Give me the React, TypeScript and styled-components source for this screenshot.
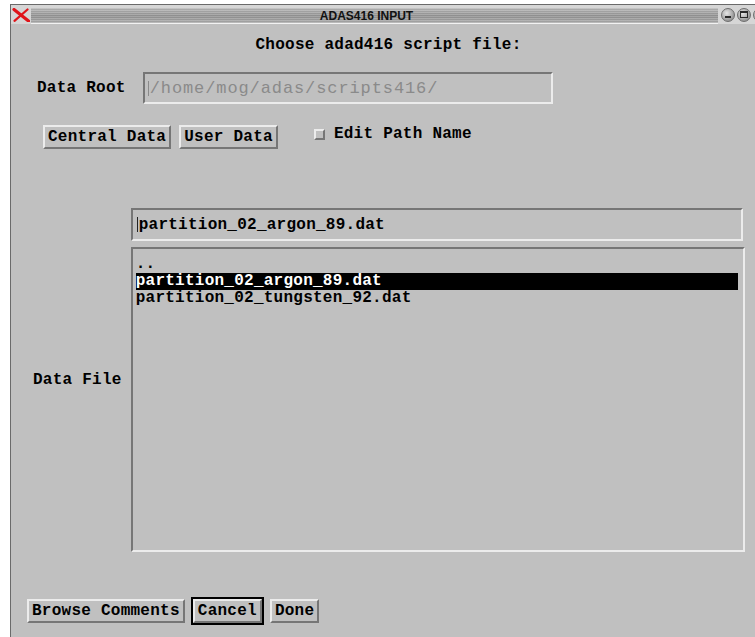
import React from "react";
import styled, { createGlobalStyle, css } from "styled-components";

const mono = `"Liberation Mono", "DejaVu Sans Mono", monospace`;

const GlobalStyle = createGlobalStyle`
  html, body {
    margin: 0;
    padding: 0;
    background: #ffffff;
    overflow: hidden;
  }
  #root {
    width: 755px;
    height: 637px;
    overflow: hidden;
  }
`;

const raised = css`
  border: 2px solid;
  border-color: #ececec #767676 #767676 #ececec;
`;

const sunken = css`
  border: 2px solid;
  border-color: #767676 #ececec #ececec #767676;
`;

const Window = styled.div`
  margin: 4px 0 0 10px;
  width: 755px;
  height: 640px;
  background: #c0c0c0;
  border-top: 1px solid #6a6a6a;
  border-left: 1px solid #6a6a6a;
  display: flex;
  flex-direction: column;
  font-family: ${mono};
  font-weight: bold;
  font-size: 16px;
  letter-spacing: 0.25px;
  color: #000;
`;

const TitleBar = styled.div`
  height: 19px;
  display: flex;
  align-items: stretch;
  background: #d6d6d6;
`;

const CloseBox = styled.div`
  width: 20px;
  display: flex;
  align-items: center;
  justify-content: center;
`;

const Stripe = styled.div`
  flex: 1;
  margin-top: 3px;
  border-bottom: 1px solid #f2f2f2;
  background:
    repeating-linear-gradient(
      to bottom,
      rgba(255, 255, 255, 0.12) 0 1px,
      rgba(0, 0, 0, 0.07) 1px 2px
    ),
    linear-gradient(to bottom, #bdbdbd, #979797 55%, #b2b2b2);
  display: flex;
  align-items: center;
  justify-content: center;
  padding-right: 16px;
  font-family: "Liberation Sans", Arial, sans-serif;
  font-size: 12px;
  font-weight: bold;
  letter-spacing: 0;
  color: #111;
`;

const Controls = styled.div`
  width: 48px;
  display: flex;
  align-items: center;
  gap: 2px;
  padding-left: 3px;
  box-sizing: border-box;
`;

const Knob = styled.div`
  width: 14px;
  height: 14px;
  flex: none;
  border-radius: 50%;
  border: 1px solid #6e6e6e;
  box-sizing: border-box;
  background: radial-gradient(circle at 40% 35%, #e6e6e6, #8e8e8e 80%);
  display: flex;
  align-items: center;
  justify-content: center;
`;

const MinGlyph = styled.span`
  width: 6px;
  height: 2px;
  margin-top: 4px;
  background: #2a2a2a;
`;

const MaxGlyph = styled.span`
  width: 6px;
  height: 4px;
  border: 1px solid #2a2a2a;
  border-top-width: 2px;
`;

const Content = styled.div`
  flex: 1;
  display: flex;
  flex-direction: column;
`;

const Heading = styled.div`
  margin-top: 12px;
  line-height: 18px;
  text-align: center;
`;

const RootRow = styled.div`
  margin-top: 18px;
  padding-left: 26px;
  display: flex;
  align-items: center;
  gap: 17px;
`;

const Label = styled.span`
  line-height: 18px;
  white-space: pre;
`;

const RootInput = styled.div`
  ${sunken};
  width: 410px;
  height: 32px;
  box-sizing: border-box;
  padding-left: 3px;
  display: flex;
  align-items: center;
  font-weight: normal;
  font-size: 17px;
  letter-spacing: 0.9px;
  color: #8a8a8a;
  white-space: pre;
`;

const Caret = styled.span<{ $dim?: boolean }>`
  width: 1px;
  height: 15px;
  margin-right: 1px;
  flex: none;
  background: ${(p) => (p.$dim ? "#8a8a8a" : "#222")};
`;

const ButtonRow = styled.div`
  margin-top: 21px;
  padding-left: 32px;
  display: flex;
  align-items: flex-start;
  gap: 8px;
`;

const Button = styled.button`
  ${raised};
  height: 24px;
  padding: 0 3px;
  margin: 0;
  background: #c0c0c0;
  font: inherit;
  letter-spacing: inherit;
  line-height: 20px;
  color: #000;
  white-space: pre;
`;

const FocusRing = styled.div`
  border: 2px solid #000;
  display: flex;
`;

const CheckGroup = styled.label`
  margin-left: 28px;
  display: flex;
  align-items: center;
  gap: 9px;
  line-height: 18px;
`;

const CheckBox = styled.span`
  ${raised};
  width: 11px;
  height: 11px;
  box-sizing: border-box;
  background: #c0c0c0;
`;

const FileRow = styled.div`
  margin-top: 59px;
  padding-left: 22px;
  display: flex;
  align-items: center;
  gap: 9px;
`;

const FileColumn = styled.div`
  display: flex;
  flex-direction: column;
  gap: 6px;
`;

const FileEntry = styled.div`
  ${sunken};
  width: 612px;
  height: 33px;
  box-sizing: border-box;
  padding-left: 4px;
  display: flex;
  align-items: center;
  white-space: pre;
`;

const FileList = styled.ul`
  ${sunken};
  width: 614px;
  height: 305px;
  box-sizing: border-box;
  margin: 0;
  padding: 7px 5px 0 3px;
  list-style: none;
`;

const ListItem = styled.li<{ $selected?: boolean }>`
  height: 17px;
  line-height: 17px;
  white-space: pre;
  background: ${(p) => (p.$selected ? "#000" : "transparent")};
  color: ${(p) => (p.$selected ? "#fff" : "#000")};
`;

const Footer = styled.div`
  margin-top: 45px;
  padding-left: 16px;
  display: flex;
  align-items: center;
  gap: 6px;
`;

const files = ["..", "partition_02_argon_89.dat", "partition_02_tungsten_92.dat"];

export default function App() {
  return (
    <>
      <GlobalStyle />
      <Window>
        <TitleBar>
          <CloseBox>
            <svg width="18" height="14" viewBox="0 0 18 14">
              <path d="M2 1.5 L16.5 13" stroke="#e0141a" strokeWidth="3.2" strokeLinecap="round" />
              <path d="M15.5 1.5 L2.5 12.8" stroke="#e0141a" strokeWidth="2.2" strokeLinecap="round" />
            </svg>
          </CloseBox>
          <Stripe>ADAS416 INPUT</Stripe>
          <Controls>
            <Knob>
              <MinGlyph />
            </Knob>
            <Knob>
              <MaxGlyph />
            </Knob>
            <Knob />
          </Controls>
        </TitleBar>
        <Content>
          <Heading>Choose adad416 script file:</Heading>
          <RootRow>
            <Label>Data Root</Label>
            <RootInput>
              <Caret $dim />
              /home/mog/adas/scripts416/
            </RootInput>
          </RootRow>
          <ButtonRow>
            <Button>Central Data</Button>
            <Button>User Data</Button>
            <CheckGroup>
              <CheckBox />
              Edit Path Name
            </CheckGroup>
          </ButtonRow>
          <FileRow>
            <Label>Data File</Label>
            <FileColumn>
              <FileEntry>
                <Caret />
                partition_02_argon_89.dat
              </FileEntry>
              <FileList>
                {files.map((f, i) => (
                  <ListItem key={f} $selected={i === 1}>
                    {f}
                  </ListItem>
                ))}
              </FileList>
            </FileColumn>
          </FileRow>
          <Footer>
            <Button>Browse Comments</Button>
            <FocusRing>
              <Button>Cancel</Button>
            </FocusRing>
            <Button>Done</Button>
          </Footer>
        </Content>
      </Window>
    </>
  );
}
